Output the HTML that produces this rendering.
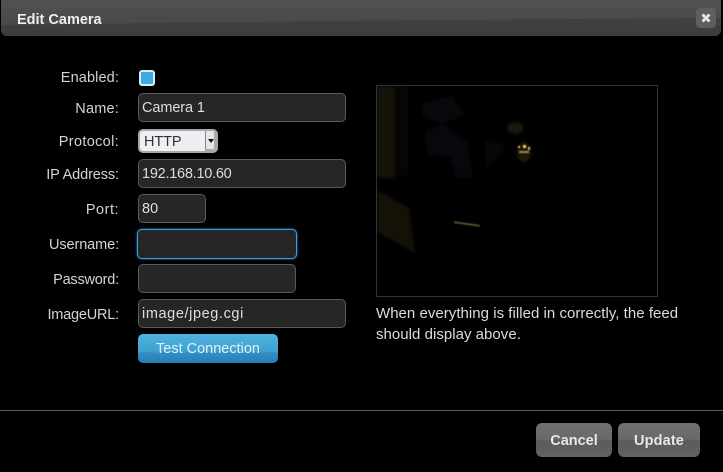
<!DOCTYPE html>
<html><head><meta charset="utf-8"><style>
*{box-sizing:border-box}
html,body{margin:0;padding:0;background:#000}
body{position:relative;width:723px;height:472px;overflow:hidden;font-family:"Liberation Sans",sans-serif;color:#d8d8d8;font-size:14.5px}
.a{position:absolute}
.l{position:absolute;left:0;width:119px;text-align:right;line-height:20px;color:#d4d4d4;margin-top:1px}
.i{position:absolute;left:138px;height:29px;background:#262626;border:1px solid #5a5a5a;border-radius:5px;padding-left:3px;line-height:29px;color:#dedede}
.b{position:absolute;top:423px;height:34px;border-radius:6px;background:linear-gradient(#727272 0,#686868 50%,#5a5a5a 52%,#636363 100%);color:#e8e8e8;font-weight:bold;text-align:center;line-height:37px}
</style></head><body>
<div class="a" style="left:1px;top:0;width:720px;height:36px;border-radius:0 0 6px 6px;overflow:hidden;background:#404040">
<svg width="720" height="36" style="position:absolute;left:0;top:0"><defs><linearGradient id="g" x1="0" y1="0" x2="0" y2="1"><stop offset="0" stop-color="#525252"/><stop offset="1" stop-color="#484848"/></linearGradient><linearGradient id="h" x1="0" y1="0" x2="0" y2="1"><stop offset="0" stop-color="#454545"/><stop offset="1" stop-color="#3c3c3c"/></linearGradient></defs><rect width="720" height="36" fill="url(#h)"/><path d="M0 0H720V18Q360 20 0 25Z" fill="url(#g)"/></svg>
</div>
<div class="a" style="left:17px;top:10px;font-weight:bold;font-size:14.5px;line-height:20px;color:#eee">Edit Camera</div>
<div class="a" style="left:696px;top:8px;width:20px;height:20px;border-radius:4px;background:#5e5e5e"><svg width="20" height="20"><path d="M6.5 6.5L13.5 13.5M13.5 6.5L6.5 13.5" stroke="#e4e4e4" stroke-width="3"/></svg></div>

<div class="l" style="top:67px;letter-spacing:.12px">Enabled:</div>
<div class="a" style="left:139px;top:70px;width:16px;height:16px;border:2px solid #d8ecf8;border-radius:3px;background:#3fa9e6"></div>
<div class="l" style="top:98px;letter-spacing:.2px">Name:</div>
<div class="i" style="top:93px;width:208px;letter-spacing:-.1px">Camera 1</div>
<div class="l" style="top:131px;letter-spacing:.33px">Protocol:</div>
<div class="a" style="left:138px;top:129px;width:80px;height:24px;background:#eeeff2;border:2px solid #a8a8a8;border-radius:5px;color:#333;line-height:22px;padding-left:4px;letter-spacing:-.1px">HTTP
<div class="a" style="left:65px;top:0;width:11px;height:20px;background:#e6e6e6;border-left:1px solid #888;border-right:2px solid #aaa;border-bottom:2px solid #aaa"></div>
<div class="a" style="left:68px;top:8px;width:0;height:0;border:3.5px solid transparent;border-top:4px solid #111"></div></div>
<div class="l" style="top:164px;letter-spacing:-.1px">IP Address:</div>
<div class="i" style="top:159px;width:208px;letter-spacing:-.25px">192.168.10.60</div>
<div class="l" style="top:199px;letter-spacing:.5px">Port:</div>
<div class="i" style="top:194px;width:68px">80</div>
<div class="l" style="top:234px;letter-spacing:-.1px">Username:</div>
<div class="i" style="top:229px;left:137px;width:160px;height:30px;border:1px solid #3aa0e0;box-shadow:0 0 2px #2b8fd0"></div>
<div class="l" style="top:269px;letter-spacing:-.2px">Password:</div>
<div class="i" style="top:264px;width:158px"></div>
<div class="l" style="top:304px;letter-spacing:-.2px">ImageURL:</div>
<div class="i" style="top:299px;width:208px;letter-spacing:.6px">image/jpeg.cgi</div>
<div class="a" style="left:138px;top:334px;width:140px;height:29px;border-radius:5px;background:linear-gradient(#4fb3de 0,#3fa0d0 62%,#3290c6 64%,#2a7cb4 100%);color:#dff1fa;text-align:center;line-height:31px">Test Connection</div>

<div class="a" style="left:376px;top:85px;width:282px;height:212px;border:1px solid #2a3444;background:#000;overflow:hidden">
<svg width="280" height="210" style="position:absolute;left:0;top:0">
<defs><filter id="b" color-interpolation-filters="sRGB" x="-10%" y="-10%" width="120%" height="120%"><feGaussianBlur stdDeviation="1.2"/></filter><filter id="c" color-interpolation-filters="sRGB"><feGaussianBlur stdDeviation=".5"/></filter></defs>
<g filter="url(#b)">
<rect x="0" y="0" width="17" height="92" fill="#16130a"/>
<rect x="17" y="0" width="14" height="90" fill="#070603"/>
<path d="M0 104L32 122L38 167L0 146Z" fill="#141107"/>
<path d="M45 18L75 10L88 28L66 38L90 55L96 92L80 92L72 70L50 68L48 45L65 38L45 30Z" fill="#08080c"/>
<path d="M108 55L130 58L112 82L108 80Z" fill="#070709"/>
<ellipse cx="138" cy="42" rx="8" ry="6" fill="#1c160c"/>
<ellipse cx="147" cy="66" rx="7" ry="10" fill="#1e180d"/>
</g>
<g filter="url(#c)">
<rect x="77" y="137" width="26" height="2" fill="#5a4c30" transform="rotate(8 90 138)"/>
<rect x="141" y="60" width="2" height="2" fill="#e0c050"/><rect x="146" y="59" width="3" height="3" fill="#f0d060"/><rect x="151" y="61" width="2" height="3" fill="#d8b848"/><rect x="142" y="65" width="10" height="2" fill="#a08a40"/>
</g>
</svg></div>
<div class="a" style="left:376px;top:303px;width:320px;line-height:21px;color:#dcdcdc;font-size:15px;letter-spacing:.03px">When everything is filled in correctly, the feed should display above.</div>

<div class="a" style="left:0;top:410px;width:723px;height:1px;background:#5a5a5a"></div>
<div class="b" style="left:536px;width:76px">Cancel</div>
<div class="b" style="left:618px;width:82px;letter-spacing:.15px">Update</div>
</body></html>
